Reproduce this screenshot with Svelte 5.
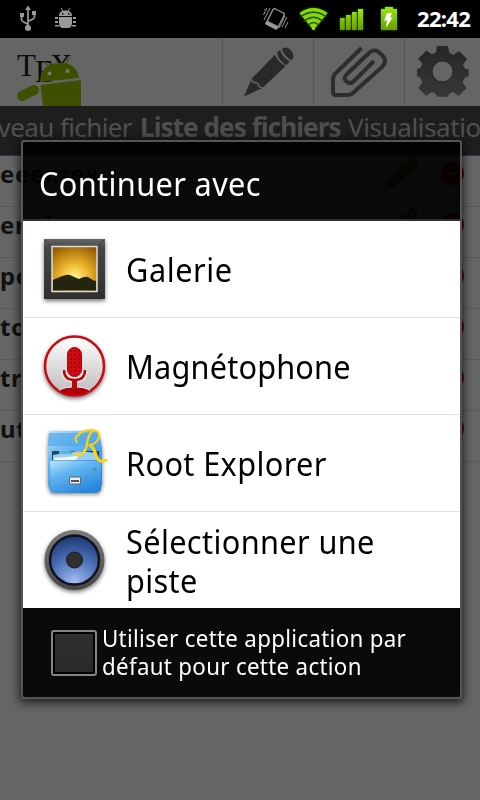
<script>
  const files = ['eeer.tex', 'ert.ken.apr', 'poster.tex', 'todo.tex', 'travail.tex', 'utiles.tex'];
  const apps = [
    { id: 'gallery', name: ['Galerie'], spacing: 0.6 },
    { id: 'mic', name: ['Magnétophone'], spacing: 0.2 },
    { id: 'root', name: ['Root Explorer'], spacing: 0.4 },
    { id: 'speaker', name: ['Sélectionner une', 'piste'], spacing: 0.4 }
  ];
</script>

{#snippet pencil()}
  <path d="M0 50 8 31 32 6Q35 14 43 18L19 41ZM34 4l3-3Q40 9 47 13l-3 4Q36 13 34 4ZM39 0Q44-4 49 2 53 7 49 12 42 8 39 0Z" />
{/snippet}

<div class="screen">
  <header class="status">
    <svg width="480" height="38" viewBox="0 0 480 38">
      <g fill="#999" stroke="#999">
        <path d="M28 27V9M21.500 16v4q0 1 6 4M34.500 14v3q0 2-6 4" fill="none" stroke-width="1.700" />
        <path d="M28 5.500 31 10H25ZM20 13h4v4h-4ZM32 11h4v4h-4Z" stroke="none" />
        <circle cx="28" cy="28" r="3" stroke="none" />
        <path d="M59 16q0-5.500 6.500-5.500T72 16ZM59 17h13v6q0 5-4 5h-5q-4 0-4-5ZM55 17h3v2h-3zM55 21h3v2h-3zM55 25h4v1.500h-4zM73 17h3v2h-3zM73 21h3v2h-3zM72 25h4v1.500h-4z" stroke="none" />
        <path d="m61 8 2 3M70 8l-2 3" stroke-width="1" />
        <path d="M62 13h1.500v1.500H62zM68 13h1.500v1.500H68z" fill="#000" stroke="none" />
      </g>
      <g fill="none" stroke="#999">
        <path d="M274.500 8.500 283.500 13Q285 14 284 15.500L277.500 28 266.500 22.500 273 9.500Z" stroke-width="1.300" />
        <path d="M267 21 278 26.500 276.500 29.500 265.500 24Z" fill="#999" />
        <path d="m270 8-6 12M267 8l-3.500 7M282 27l5-10M285 28l3-6M264 10l1-1M279 28l6-12" />
      </g>
      <g class="glow">
        <path d="M299.500 13Q313.500 3 327.500 13L313.500 30Z" fill="#85db08" />
        <path d="M301 16.500Q313.500 8 326 16.500M304.500 21Q313.500 13.500 322.500 21M308.500 25Q313.500 20 318.500 25" fill="none" stroke="#294800" stroke-width="1.500" />
        <circle cx="313.500" cy="28.500" r="1.500" fill="#8de20b" />
        <path d="M340 18h4.700v12H340zM346 15h4.700v15H346zM352 12h4.700v18H352zM358 9h5v21h-5z" fill="url(#green)" />
        <path d="M385 7h8v2h4v21h-16V9h4Z" fill="url(#green)" />
      </g>
      <path d="M387 13h5l-2 5 3-1-7 11 1-8-3 1Z" fill="#fff" />
      <defs><linearGradient id="green" x2="0" y2="1"><stop stop-color="#9cea10" /><stop offset="1" stop-color="#659d00" /></linearGradient></defs>
    </svg>
    <time>22:42</time>
  </header>

  <div class="actionbar">
    <svg class="logo" width="222" height="68" viewBox="0 38 222 68">
      <g class="tex"><text x="17" y="76">T</text><text x="35" y="82">E</text><text x="50" y="76">X</text></g>
      <g fill="#3e5000">
        <path d="M40 82Q40 67 54 63.500 70 60 77 71L79 78Z" />
        <path d="m40.500 85 39.500-5 1 1V106H43Z" />
        <path d="m22 96 12-6" stroke="#3e5000" stroke-width="10" stroke-linecap="round" />
        <path d="m48 66-4-5M66 64l3-6" stroke="#3e5000" stroke-width="1.200" />
      </g>
      <path d="m40 83.500 39.500-4.500" stroke="#656565" stroke-width="1.500" />
      <circle cx="49.500" cy="73.500" r="2" fill="#777" /><circle cx="67.500" cy="71" r="2" fill="#777" />
    </svg>
    <div class="action">
      <svg width="90" height="68" viewBox="223 38 90 68">
        <g fill="#292929" transform="translate(244 49) scale(.97 .95)">{@render pencil()}<path d="M7 32Q9 36 14 36 15 41 20 41" fill="none" stroke="#656565" stroke-width="1.500" /></g>
      </svg>
    </div>
    <div class="action">
      <svg width="90" height="68" viewBox="314 38 90 68" fill="none" stroke="#2d2d2d" stroke-width="4" stroke-linejoin="round">
        <path d="M361.500 48 337 72Q333 75 333 79v13q0 3 3 3h12q3 0 6-3l28-25q6-6 0-12-7-8-13-2L347 74q-4 4-1 7 4 4 8 0l20-20" />
      </svg>
    </div>
    <div class="action">
      <svg width="75" height="68" viewBox="405 38 75 68">
        <path d="M437 46h11l1.500 7 4 1.700L459 51l8 8-4 5.500 1.700 4 4 1V76l-4 2-2 4.500 4 5.500-8 8-5.500-4-4 1.700-1.200 3H437l-1.200-3-4-1.700-5.500 4-8-8 4-5.500-2-4.500-3.300-2v-7l3.300-1 2-4-4-5.500 8-8 5.500 3.700 4-1.700Z" fill="url(#gear)" />
        <circle cx="442.500" cy="71.500" r="10.500" fill="#656565" stroke="#252525" stroke-width="1" />
        <defs><linearGradient id="gear" x2="0" y2="1"><stop stop-color="#262626" /><stop offset="1" stop-color="#373737" /></linearGradient></defs>
      </svg>
    </div>
  </div>

  <nav class="tabs">
    <span class="tab left">Nouveau fichier</span>
    <span class="tab current">Liste des fichiers</span>
    <span class="tab right">Visualisation</span>
  </nav>

  <ul class="files">
    {#each files as file}
      <li>
        <b>{file}</b>
        <svg width="100" height="50" viewBox="-10 0 100 50">
          <g fill="#353900" transform="translate(-7 2) scale(.68)">{@render pencil()}</g>
          <circle cx="62.500" cy="17.500" r="11.500" fill="#600000" /><path d="M55 17.500h15" stroke="#746060" />
        </svg>
      </li>
    {/each}
  </ul>

  <section class="dialog">
    <h1><span class="narrow">Continuer avec</span></h1>
    <ul class="apps">
      {#each apps as app}
        <li>
          <svg width="76" height="76" viewBox="0 {app.id === 'root' ? -3 : -1} 76 76">
            {#if app.id === 'gallery'}
              <defs>
                <radialGradient id="sun" cy=".7" r=".8"><stop stop-color="#fff79a" /><stop offset=".4" stop-color="#eeb62c" /><stop offset="1" stop-color="#8e5500" /></radialGradient>
                <linearGradient id="frame" x2="0" y2="1"><stop stop-color="#666" /><stop offset=".15" stop-color="#454747" /><stop offset="1" stop-color="#303030" /></linearGradient>
              </defs>
              <rect x="7" y="7" width="61" height="60" rx="1" fill="url(#frame)" class="shade" />
              <path d="m7 7 8 8M68 7l-8 8M7 67l8-8M68 67l-8-8" stroke="#222" stroke-opacity=".5" />
              <rect x="15" y="14.500" width="45" height="45" fill="url(#sun)" stroke="#ddd" stroke-width="1.500" />
              <path d="M16 48Q24 44 29 43q3-1 6 1l7 3q6-3 9-2 4 3 8 4v9.500H16Z" fill="#242411" />
            {:else if app.id === 'mic'}
              <defs><linearGradient id="silver" x2="0" y2="1"><stop stop-color="#fff" /><stop offset="1" stop-color="#bbb" /></linearGradient><clipPath id="disc"><circle cx="37.500" cy="37" r="29" /></clipPath>
                <pattern id="mesh" width="4" height="4" patternUnits="userSpaceOnUse"><rect width="4" height="4" fill="#cc0d13" /><circle cx="2" cy="2" r="1" fill="#a50007" /></pattern></defs>
              <circle cx="37.500" cy="37" r="29.500" fill="url(#silver)" stroke="#c80b11" stroke-width="2.500" class="shade" />
              <g clip-path="url(#disc)">
                <path d="M17 67Q22 58 35 58h5Q53 58 58 67Z" fill="#b00007" stroke="#eee" />
                <path d="M27 41q0 10 10.500 10T48 41M37.500 51v8" fill="none" stroke="#eee" stroke-width="5" />
                <path d="M27 41q0 10 10.500 10T48 41" fill="none" stroke="#b9050b" stroke-width="2.500" />
                <path d="M37.500 51v9" stroke="#b9050b" stroke-width="5" />
              </g>
              <rect x="30.500" y="18.500" width="14" height="29" rx="7" fill="url(#mesh)" stroke="#b60007" />
            {:else if app.id === 'root'}
              <defs><linearGradient id="blue" x2=".6" y2="1"><stop stop-color="#bfe3fc" /><stop offset=".4" stop-color="#62b5f1" /><stop offset="1" stop-color="#2788db" /></linearGradient></defs>
              <path d="M12 5q0-2 3-2h44q3 0 3 3l3 14v36l-3 8H14l-3-8V20Z" fill="url(#blue)" class="shade" />
              <path d="M12 5h50l2 13H11Z" fill="#4ea5e8" opacity=".65" />
              <path d="M15 23h47v9H15Z" fill="#27445f" /><path d="m16 27 25-4 19 2v7H16Z" fill="#9bcff0" /><path d="M17 30 41 28l-2 4H17Z" fill="#f4f8fa" /><path d="M22 23h12l1 3H22Z" fill="#58b4e8" />
              <path d="M13 33h51v29q-2 3-5 3H18q-4 0-4-3Z" fill="url(#blue)" />
              <rect x="32.500" y="49" width="11" height="7" rx="1" fill="#eee" stroke="#596775" /><path d="M34 53h8" stroke="#555" stroke-width="2" />
              <circle cx="57.500" cy="41.500" r="1.700" fill="#6489aa" />
              <g fill="none" stroke="#ffd40a" stroke-linecap="round">
                <path d="M40 14Q37 12 40 8 45 2 54 2q9 0 8 7-2 7-9 8" stroke-width="2" />
                <path d="M55 3Q51 8 50 16 49 24 43 27l-5-1" stroke-width="2.300" />
                <path d="M53 17q4 3 6 10 3 9 10 5" stroke-width="3" />
              </g>
            {:else}
              <defs><radialGradient id="cone" cy=".95" r=".9"><stop stop-color="#a2bdf2" /><stop offset=".55" stop-color="#4d70b8" /><stop offset="1" stop-color="#203d78" /></radialGradient><linearGradient id="rim" x2="0" y2="1"><stop stop-color="#7c7c7c" /><stop offset="1" stop-color="#464646" /></linearGradient></defs>
              <circle cx="37.500" cy="37" r="30" fill="url(#rim)" class="shade" />
              <circle cx="37.500" cy="37" r="24.500" fill="url(#cone)" stroke="#10131a" stroke-width="2.500" />
              <circle cx="37.500" cy="37" r="8" fill="#303030" stroke="#151a24" />
            {/if}
          </svg>
          <span class="name narrow" style="letter-spacing: {app.spacing}px">{#each app.name as line}<span class="line">{line}</span>{/each}</span>
        </li>
      {/each}
    </ul>
    <label class="default">
      <i class="box"></i>
      <span class="narrow"><span class="line">Utiliser cette application par</span><span class="line">défaut pour cette action</span></span>
    </label>
  </section>
</div>

<style>
  :global(body) { margin: 0; background: #656565; }
  * { box-sizing: border-box; }
  .screen { position: relative; width: 480px; height: 800px; overflow: hidden; background: #656565; font-family: "Noto Sans", "Open Sans", sans-serif; }
  svg { display: block; flex: none; }
  ul { list-style: none; margin: 0; padding: 0; }
  .status { height: 38px; background: #000; display: flex; }
  .status time { margin-left: -63px; color: #fff; font: bold 22px/37px "Noto Sans", sans-serif; letter-spacing: -.7px; }
  .glow { filter: drop-shadow(0 0 1px #497900); }
  .actionbar { height: 68px; display: flex; }
  .tex { font: 31px "Liberation Serif", serif; fill: #0b0b0b; }
  .action { border-left: 1px solid #555; }
  .tabs { height: 50px; background: #1e1e1e; border-bottom: 1px solid #303052; display: flex; color: #505050; font-size: 26px; line-height: 43px; white-space: nowrap; }
  .tab { flex: none; letter-spacing: -.6px; }
  .current { width: 200px; font-weight: bold; margin: 0 8px; color: #4e4e4e; letter-spacing: -.9px; }
  .left { width: 132px; display: flex; justify-content: flex-end; }
  .right { width: 132px; letter-spacing: -.4px; }
  .files li { height: 51px; border-bottom: 1px solid #595959; display: flex; justify-content: space-between; }
  .files b { font-size: 24px; line-height: 36px; color: #111; letter-spacing: .6px; }
  .dialog { position: absolute; left: 21px; top: 140px; width: 441px; height: 559px; border: 2px solid #555; border-radius: 3px; background: rgba(0, 0, 0, .9); background-clip: padding-box; box-shadow: 0 2px 9px 2px rgba(0, 0, 0, .65); color: #fff; }
  .narrow { display: inline-block; transform: scaleX(.93); transform-origin: left; }
  h1 { margin: 0; height: 79px; padding: 0 0 0 16px; border-bottom: 2px solid #303030; font-weight: 400; font-size: 33px; line-height: 83px; letter-spacing: .4px; white-space: nowrap; }
  .apps { background: #fff; }
  .apps li { height: 97px; border-bottom: 1px solid #e0e0e0; padding: 0 0 0 14px; display: flex; align-items: center; color: #000; }
  .apps li:last-child { height: 96px; border: 0; }
  .name { margin: 1px 0 0 13px; font-size: 33px; line-height: 39px; }
  .line { display: block; white-space: nowrap; }
  .shade { filter: drop-shadow(0 2px 2px rgba(0, 0, 0, .55)); }
  .default { height: 87px; display: flex; align-items: center; padding-left: 28px; font-size: 24px; line-height: 28px; letter-spacing: .33px; }
  .box { width: 46px; height: 46px; margin: 2px 5px 0 0; border: 2px solid #858585; border-radius: 3px; background: linear-gradient(#303030, #292929); box-shadow: inset 0 0 0 2px #000; flex: none; }
</style>
